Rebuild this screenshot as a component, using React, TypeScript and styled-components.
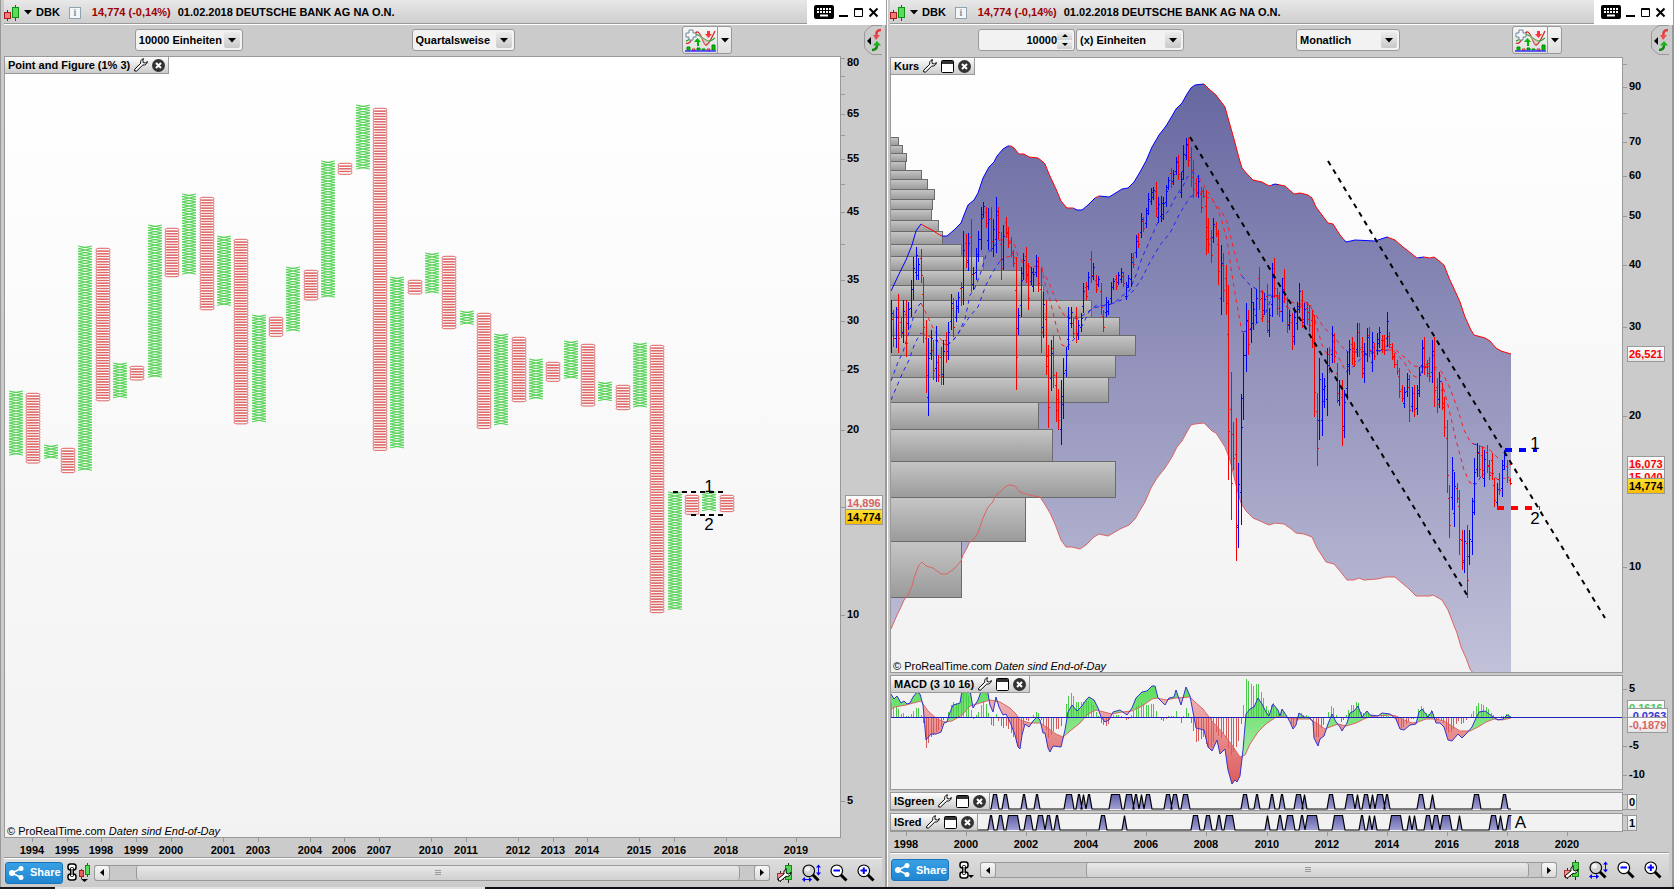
import React from "react";
import styled, { createGlobalStyle } from "styled-components";

const GlobalStyle = createGlobalStyle`
  * { box-sizing: border-box; }
  html, body, #root { height: 100%; }
  body {
    margin: 0;
    background: #fff;
    color: #000;
    font: bold 11px/13px "Liberation Sans", Arial, sans-serif;
  }
  button, input, select { font: inherit; color: inherit; margin: 0; padding: 0; }
  svg { display: block; }
`;

/* ---------- types and helpers ---------- */

type Pt = [number, number];

const parsePoints = (s: string): Pt[] =>
  s.trim().split(/\s+/).map((p) => p.split(",").map(Number) as Pt);

const linePath = (pts: Pt[]) => "M" + pts.map((p) => p.join(" ")).join("L");

const yAt = (pts: Pt[], x: number) => {
  for (let i = 1; i < pts.length; i++) {
    if (x <= pts[i][0]) {
      const [x0, y0] = pts[i - 1];
      const [x1, y1] = pts[i];
      return y0 + ((x - x0) / (x1 - x0)) * (y1 - y0);
    }
  }
  return pts[pts.length - 1][1];
};

/** Splits a line into the parts inside the given x ranges. */
const slicePath = (pts: Pt[], ranges: Pt[]) =>
  ranges
    .map(([a, b]) =>
      linePath([[a, yAt(pts, a)], ...pts.filter((p) => p[0] > a && p[0] < b), [b, yAt(pts, b)]])
    )
    .join("");

/* ---------- layout ---------- */

const Workspace = styled.main`
  display: grid;
  grid-template-columns: 887fr 786fr;
  column-gap: 1px;
  min-width: 1000px;
  min-height: 600px;
  height: 100vh;
  padding-bottom: 2px;
  background: linear-gradient(90deg, #1a1a1e 0 55px, #e2e2e2 55px 29%, #120d16 29%) bottom / 100% 2px no-repeat #fff;
`;

const Win = styled.section<{ $edge?: boolean }>`
  display: flex;
  flex-direction: column;
  min-width: 0;
  min-height: 0;
  background: #cbcbcb;
  border-left: ${(p) => (p.$edge ? "1px solid #999" : "0")};
  padding-left: ${(p) => (p.$edge ? "3px" : "2px")};
  border-right: 2px solid #999;
`;

const TitleBar = styled.header`
  display: flex;
  height: 25px;
  flex: none;
  margin-right: -1px;
  border-bottom: 1px solid #fff;
`;

const TitleMain = styled.div`
  display: flex;
  align-items: center;
  flex: 1;
  min-width: 0;
  padding-top: 2px;
  overflow: hidden;
  white-space: nowrap;
  border-bottom: 1px solid #999;
  background: linear-gradient(#e8e8e8, #cecece);
`;

const IconButton = styled.button`
  display: flex;
  align-items: center;
  justify-content: center;
  border: 0;
  background: none;
`;

const SymbolButton = styled(IconButton)`
  gap: 4px;
  height: 20px;
`;

const InfoButton = styled.button`
  width: 12px;
  height: 12px;
  margin: 0 11px 0 9px;
  border: 1px solid #8fa3b0;
  background: #f4f7f9;
  color: #7d93a3;
  font: bold 10px/10px "Liberation Serif", serif;
`;

const Quote = styled.span`
  color: #9d0000;
  margin-right: 7px;
`;

const WindowControls = styled.div`
  display: flex;
  align-items: center;
  gap: 4px;
  width: 79px;
  padding-left: 7px;
  background: #fff;
`;

const Toolbar = styled.div<{ $h: number; $cols: string }>`
  display: grid;
  grid-template-columns: ${(p) => p.$cols};
  height: ${(p) => p.$h}px;
  flex: none;
  padding-bottom: ${(p) => p.$h - 30}px;
`;

const Field = styled.div<{ $w: number }>`
  position: relative;
  width: ${(p) => p.$w}px;
  height: 22px;
  margin-top: 4px;
  border: 1px solid #999;
  border-radius: 3px;
  background: #f2f2f2;
`;

const SelectBox = styled.select`
  appearance: none;
  width: 100%;
  height: 100%;
  border: 0;
  padding: 0 0 0 3px;
  background: transparent;
  outline: 0;
`;

const SelectArrow = styled.span`
  position: absolute;
  right: 2px;
  top: 2px;
  width: 16px;
  height: 16px;
  display: flex;
  align-items: center;
  justify-content: center;
  border-radius: 2px;
  background: linear-gradient(#ececec, #c9c9c9);
  pointer-events: none;
`;

const Units = styled.div`
  display: flex;
  gap: 1px;
`;

const NumberField = styled(Field)`
  display: flex;
  align-items: center;
  padding-right: 2px;
`;

const NumberInput = styled.input`
  flex: 1;
  min-width: 0;
  border: 0;
  outline: 0;
  background: transparent;
  text-align: right;
`;

const Spinner = styled.span`
  display: flex;
  flex-direction: column;
  gap: 1px;
`;

const SpinButton = styled(IconButton)`
  width: 15px;
  height: 8px;
  background: linear-gradient(#ececec, #cfcfcf);
`;

const Split = styled.div`
  display: flex;
  width: 50px;
  height: 28px;
  margin-top: 1px;
  border: 1px solid #999;
  border-radius: 3px;
  background: linear-gradient(#f6f6f6, #dedede);
`;

const SplitMain = styled(IconButton)`
  width: 35px;
  border-right: 1px solid #999;
`;

const SplitMore = styled(IconButton)`
  flex: 1;
`;

const SideTab = styled(IconButton)`
  width: 18px;
  height: 30px;
`;

const Row = styled.div<{ $h?: number; $axis: number; $gap?: boolean }>`
  display: grid;
  grid-template-columns: minmax(0, 1fr) ${(p) => p.$axis}px;
  ${(p) => (p.$h ? `flex: none; height: ${p.$h}px;` : "flex: 1; min-height: 0;")}
  margin-bottom: ${(p) => (p.$gap ? "2px" : "0")};
`;

const PlotBox = styled.div<{ $flat?: boolean }>`
  position: relative;
  min-width: 0;
  min-height: 0;
  border: 1px solid #999;
  overflow: hidden;
  background: ${(p) => (p.$flat ? "#f2f2f2" : "linear-gradient(#ffffff, #f2f2f2)")};
`;

const PlotSvg = styled.svg`
  position: absolute;
  inset: 0;
  width: 100%;
  height: 100%;
`;

const PanelTab = styled.div`
  position: absolute;
  left: 0;
  top: 0;
  display: flex;
  align-items: center;
  gap: 4px;
  height: 17px;
  padding: 0 3px;
  border: solid #999;
  border-width: 0 1px 1px 0;
  background: linear-gradient(#fdfdfd, #cccccc);
  white-space: nowrap;
`;

const PanelButton = styled(IconButton)`
  height: 15px;
`;

const Credit = styled.p`
  position: absolute;
  left: 2px;
  bottom: 0;
  margin: 0;
  font-weight: normal;
  line-height: 11px;
`;

const Note = styled.span.attrs<{ $x: number; $y: number }>((p) => ({
  style: { left: `${p.$x}%`, top: `${p.$y}%` },
}))<{ $x: number; $y: number }>`
  position: absolute;
  transform: translate(-50%, -50%);
  font: 17px/20px "Liberation Sans", Arial, sans-serif;
`;

const Scale = styled.div`
  position: relative;
`;

const YTick = styled.span.attrs<{ $at: number }>((p) => ({ style: { top: `${p.$at}%` } }))<{
  $at: number;
}>`
  position: absolute;
  left: 0;
  height: 13px;
  margin-top: -7px;
  padding-left: 6px;
  &::before {
    content: "";
    position: absolute;
    left: 0;
    top: 7px;
    width: 4px;
    height: 1px;
    background: #999;
  }
`;

const YTickPlain = styled(YTick)`
  &::before { display: none; }
`;

const ValueBox = styled.span.attrs<{ $at: number }>((p) => ({ style: { top: `${p.$at}%` } }))<{
  $at: number;
  $color: string;
  $gold?: boolean;
}>`
  position: absolute;
  left: 4px;
  height: 16px;
  margin-top: -8px;
  padding: 0 1px;
  border: 1px solid #999;
  line-height: 14px;
  color: ${(p) => p.$color};
  background: ${(p) => (p.$gold ? "linear-gradient(#ffe033, #f5bd00)" : "linear-gradient(#fff, #e4e4e4)")};
`;

const TimeScale = styled.div<{ $h: number; $axis: number }>`
  position: relative;
  flex: none;
  height: ${(p) => p.$h}px;
  margin-right: ${(p) => p.$axis}px;
`;

const XTick = styled.span.attrs<{ $at: number }>((p) => ({ style: { left: `${p.$at}%` } }))<{
  $at: number;
}>`
  position: absolute;
  top: 0;
  width: 40px;
  margin-left: -20px;
  padding-top: 6px;
  text-align: center;
  &::before {
    content: "";
    position: absolute;
    left: 20px;
    top: 0;
    width: 1px;
    height: 4px;
    background: #999;
  }
`;

const BottomBar = styled.footer<{ $h: number }>`
  display: flex;
  align-items: center;
  flex: none;
  height: ${(p) => p.$h}px;
  padding: 0 7px 0 1px;
  margin-right: 3px;
  border-top: 1px solid #999;
  box-shadow: inset 0 1px #fff;
  background: linear-gradient(#dedede, #cacaca);
`;

const ShareButton = styled.button`
  display: flex;
  align-items: center;
  gap: 6px;
  width: 58px;
  height: 22px;
  padding-left: 3px;
  border: 1px solid #1774ba;
  border-radius: 3px;
  background: linear-gradient(#38a0e4, #2186d0);
  color: #fff;
`;

const LinkButton = styled(IconButton)<{ $w: number; $ml: number }>`
  width: ${(p) => p.$w}px;
  margin-left: ${(p) => p.$ml}px;
`;

const ScrollTrack = styled.div<{ $ml: number }>`
  display: flex;
  flex: 1;
  height: 16px;
  margin: 0 7px 0 ${(p) => p.$ml}px;
  border: solid #999;
  border-width: 1px 0;
  border-radius: 3px;
  background: #c9c9c9;
`;

const ScrollButton = styled(IconButton)`
  width: 16px;
  height: 16px;
  margin-top: -1px;
  border: 1px solid #999;
  border-radius: 3px;
  background: linear-gradient(#f8f8f8, #dadada);
`;

const ScrollGap = styled.span<{ $flex: number }>`
  flex: ${(p) => p.$flex};
`;

const ScrollThumb = styled.div<{ $flex: number }>`
  display: flex;
  align-items: center;
  justify-content: center;
  flex: ${(p) => p.$flex};
  border: solid #999;
  border-width: 0 1px;
  border-radius: 3px;
  background: linear-gradient(#e8e8e8, #d0d0d0);
`;

const Tools = styled.div`
  display: flex;
  align-items: center;
  gap: 9px;
`;

/* ---------- icons ---------- */

const Arrow = ({ dir = "down" }: { dir?: "down" | "up" | "left" | "right" | "smallDown" }) => {
  const d = {
    down: "M0 0H8L4 4.5Z",
    smallDown: "M0 0H6L3 3Z",
    up: "M0 3H6L3 0Z",
    left: "M4 0V7L0 3.5Z",
    right: "M0 0V7L4 3.5Z",
  }[dir];
  const [w, h] = { down: [8, 5], smallDown: [6, 3], up: [6, 3], left: [4, 7], right: [4, 7] }[dir];
  return (
    <svg width={w} height={h}>
      <path d={d} />
    </svg>
  );
};

const CandleIcon = () => (
  <svg width="16" height="16">
    <path d="M3.5 5V16" stroke="#8c1717" />
    <rect x="0.5" y="7.5" width="6" height="6" fill="#f37c7c" stroke="#a81c1c" />
    <path d="M11.5 0V16" stroke="#0b6b0b" />
    <rect x="8.5" y="2.5" width="6" height="10" fill="#59dc59" stroke="#109010" />
  </svg>
);

const KeyboardIcon = () => (
  <svg width="20" height="14">
    <rect width="20" height="14" rx="2" />
    <path d="M3 4H17M3 7H17" stroke="#fff" strokeWidth="2" strokeDasharray="2 1" />
    <path d="M6 10.5H14" stroke="#fff" strokeWidth="2" />
  </svg>
);

const WinIcon = ({ kind }: { kind: "min" | "max" | "close" }) => (
  <svg width="11" height="11" fill="none" stroke="#000">
    {kind === "min" && <path d="M1 9H10" strokeWidth="2" />}
    {kind === "max" && <path d="M1.5 1.5H9.5V9.5H1.5ZM1 2.5H10" />}
    {kind === "close" && <path d="M1.5 1.5L9.5 9.5M9.5 1.5L1.5 9.5" strokeWidth="2" />}
  </svg>
);

const IndicatorIcon = () => (
  <svg width="31" height="24" fill="none">
    <path d="M1 15C6 18 8 5 12 4S18 17 21 17 27 9 30 3" stroke="#cc2a2a" strokeWidth="1.3" />
    <path d="M1 13C5 12 9 5 13 7S22 14 25 13 28 11 30 10" stroke="#2bab2b" strokeWidth="1.3" />
    <path d="M12 4L18 13 20 17 24 13 19 11Z" fill="#d9b3b3" opacity=".6" />
    <path d="M22 3H25V6H27L23.500 10 20 6H22Z" fill="#f33" />
    <path d="M12 18V14H9L12.500 10 16 14H14V18Z" fill="#00b400" />
    <path d="M4 2H8V5H11V9H8V12H4V9H1V5H4Z" fill="#f5f8fa" stroke="#718797" />
    <path d="M2 19H5V22H2ZM12 20H15V22H12ZM17 21H20V22H17ZM27 17H30V22H27Z" fill="#00c000" stroke="#008a00" />
    <path d="M7.500 21H10V22.500H7.500ZM22 21H25V22.500H22Z" stroke="#c22" />
    <path d="M0 23H31" stroke="#33f" strokeWidth="1.500" />
  </svg>
);

const SideTabIcon = () => (
  <svg width="18" height="30" fill="none">
    <path d="M18 .5H8Q1 5 .5 8V22Q1 25 8 29.500H18" stroke="#999" />
    <path d="M7 12V20L3 16Z" fill="#000" />
    <path d="M17 5C13 5 12 7 12.500 11" stroke="#e23b3b" strokeWidth="2.500" />
    <path d="M9 10H16L12 15Z" fill="#f24a4a" />
    <path d="M8 25C12 25 13 22 13 20" stroke="#118c11" strokeWidth="2.500" />
    <path d="M9 20.500H17L13 16Z" fill="#19b419" />
  </svg>
);

const WrenchIcon = () => (
  <svg width="14" height="14" fill="#fff" stroke="#000">
    <path d="M9.500 .7C7.300 1.200 6.200 3 6.800 5.200L.7 11.200V13H2.600L8.800 7C11 7.500 13 6.200 13.400 3.600L11.400 5 9.200 4.600 8.900 2.300Z" />
  </svg>
);

const PaneIcon = () => (
  <svg width="13" height="13">
    <rect x=".5" y=".5" width="12" height="12" rx="1" fill="#fff" stroke="#000" />
    <rect x="1" y="1" width="11" height="3" fill="#333" />
  </svg>
);

const CloseIcon = () => (
  <svg width="13" height="13">
    <circle cx="6.500" cy="6.500" r="6.500" fill="#333" />
    <path d="M4 4L9 9M9 4L4 9" stroke="#fff" strokeWidth="2" />
  </svg>
);

const ShareIcon = () => (
  <svg width="15" height="14">
    <path d="M12 2.500L3 7L12 11.500" fill="none" stroke="#fff" strokeWidth="1.500" />
    <circle cx="12" cy="2.500" r="2.500" fill="#fff" />
    <circle cx="3" cy="7" r="3" fill="#fff" />
    <circle cx="12" cy="11.500" r="2.500" fill="#fff" />
  </svg>
);

const Chain = () => (
  <g fill="none" strokeWidth="1">
    <rect x="1" y="1" width="8" height="6" rx="2.500" fill="#fff" stroke="#000" strokeWidth="1.500" />
    <rect x="1" y="11" width="8" height="6" rx="2.500" fill="#fff" stroke="#000" strokeWidth="1.500" />
    <rect x="3.500" y="4.500" width="3" height="9" rx="1" fill="#fff" stroke="#000" />
    <path d="M5 6V12" stroke="#000" />
  </g>
);

const ChainCandleIcon = () => (
  <svg width="24" height="20">
    <Chain />
    <path d="M14.500 6V16" stroke="#8c1717" />
    <rect x="12.500" y="7.500" width="4" height="6" fill="#e86060" stroke="#a81c1c" />
    <path d="M20.500 0V14" stroke="#0b6b0b" />
    <rect x="18.500" y="2.500" width="4" height="9" fill="#59dc59" stroke="#109010" />
    <path d="M14 16H21L17.500 19Z" />
  </svg>
);

const ChainIcon = () => (
  <svg width="15" height="18">
    <Chain />
    <path d="M9 14H15L12 17Z" />
  </svg>
);

const ToolIcon = () => (
  <svg width="16" height="20">
    <path d="M3.500 8V19M11.500 0V20" stroke="#222" />
    <rect x=".5" y="10.500" width="6" height="6" fill="#f09090" stroke="#a33" />
    <rect x="8.500" y="2.500" width="6" height="14" fill="#4fd44f" stroke="#178a17" />
    <path
      d="M9.300 5.800C7.300 6.500 6.400 8.800 7.100 10.800L1.400 15.600V17.800H3.700L8.900 13.400C11.500 14 13.800 12.200 14 9.400L11.600 11 9.400 10.200 9 8Z"
      fill="#fff"
      stroke="#000"
    />
  </svg>
);

const LensIcon = ({ kind }: { kind: "fit" | "out" | "in" }) => (
  <svg width={kind === "fit" ? 19 : 18} height="18" fill="none">
    <path d="M10.500 10.500L16.500 16.500" stroke="#000" strokeWidth="3" />
    <circle cx="6.800" cy="6.800" r="5.800" fill={kind === "fit" ? "#d2d2d2" : "#fff"} stroke="#000" strokeWidth="1.200" />
    {kind === "fit" && (
      <>
        <circle cx="5.500" cy="5" r="2.500" fill="#f4f4f4" />
        <path d="M16.500 1V10M1 15.500H9" stroke="#00f" />
        <path d="M14 3.500L16.500 .5 19 3.500ZM14 8.500L16.500 11.500 19 8.500ZM3 13L0 15.500 3 18ZM7 13L10 15.500 7 18Z" fill="#00f" />
      </>
    )}
    {kind !== "fit" && <path d="M3.500 6.500H10" stroke="#00f" strokeWidth="2" />}
    {kind === "in" && <path d="M6.800 3.500V10" stroke="#00f" strokeWidth="2" />}
  </svg>
);

const Grip = () => (
  <svg width="6" height="6">
    <path d="M0 .5H6M0 2.500H6M0 4.500H6" stroke="#999" />
  </svg>
);

/* ---------- shared parts ---------- */

const Title = () => (
  <TitleBar>
    <TitleMain>
      <SymbolButton aria-label="Instrument">
        <CandleIcon />
        <Arrow />
        <span>DBK</span>
      </SymbolButton>
      <InfoButton aria-label="Info">i</InfoButton>
      <Quote>14,774 (-0,14%)</Quote>
      <span>01.02.2018 DEUTSCHE BANK AG NA O.N.</span>
    </TitleMain>
    <WindowControls>
      <IconButton aria-label="Keyboard"><KeyboardIcon /></IconButton>
      <IconButton aria-label="Minimize"><WinIcon kind="min" /></IconButton>
      <IconButton aria-label="Maximize"><WinIcon kind="max" /></IconButton>
      <IconButton aria-label="Close"><WinIcon kind="close" /></IconButton>
    </WindowControls>
  </TitleBar>
);

const Dropdown = ({ label, value, width }: { label: string; value: string; width: number }) => (
  <Field $w={width}>
    <SelectBox aria-label={label} defaultValue={value}>
      <option>{value}</option>
    </SelectBox>
    <SelectArrow><Arrow /></SelectArrow>
  </Field>
);

const Indicators = () => (
  <Split>
    <SplitMain aria-label="Indicators"><IndicatorIcon /></SplitMain>
    <SplitMore aria-label="More indicators"><Arrow /></SplitMore>
  </Split>
);

const Panel = ({ name, pane = true }: { name: string; pane?: boolean }) => (
  <PanelTab>
    <span>{name}</span>
    <PanelButton aria-label={`${name} settings`}><WrenchIcon /></PanelButton>
    {pane && <PanelButton aria-label={`${name} pane`}><PaneIcon /></PanelButton>}
    <PanelButton aria-label={`${name} close`}><CloseIcon /></PanelButton>
  </PanelTab>
);

const CreditLine = () => (
  <Credit>
    © ProRealTime.com <i>Daten sind End-of-Day</i>
  </Credit>
);

interface YScaleProps {
  top: number;
  height: number;
  ticks: [number, string][];
  children?: React.ReactNode;
}

const YScale = ({ top, height, ticks, children }: YScaleProps) => (
  <Scale>
    {ticks.map(([y, label]) => (
      <YTick key={y} $at={((y - top) / height) * 100}>{label}</YTick>
    ))}
    {children}
  </Scale>
);

interface XScaleProps {
  left: number;
  width: number;
  height: number;
  axis: number;
  ticks: [number, number][];
}

const XScale = ({ left, width, height, axis, ticks }: XScaleProps) => (
  <TimeScale $h={height} $axis={axis}>
    {ticks.map(([x, year]) => (
      <XTick key={x} $at={((x - left) / width) * 100}>{year}</XTick>
    ))}
  </TimeScale>
);

interface FooterProps {
  height: number;
  candles?: boolean;
  before: number;
  thumb: number;
  after: number;
}

const Footer = ({ height, candles, before, thumb, after }: FooterProps) => (
  <BottomBar $h={height}>
    <ShareButton><ShareIcon />Share</ShareButton>
    <LinkButton $w={candles ? 24 : 15} $ml={candles ? 4 : 10} aria-label="Link windows">
      {candles ? <ChainCandleIcon /> : <ChainIcon />}
    </LinkButton>
    <ScrollTrack $ml={candles ? 3 : 6}>
      <ScrollButton aria-label="Scroll left"><Arrow dir="left" /></ScrollButton>
      <ScrollGap $flex={before} />
      <ScrollThumb $flex={thumb}><Grip /></ScrollThumb>
      <ScrollGap $flex={after} />
      <ScrollButton aria-label="Scroll right"><Arrow dir="right" /></ScrollButton>
    </ScrollTrack>
    <Tools>
      <IconButton aria-label="Chart settings"><ToolIcon /></IconButton>
      <IconButton aria-label="Fit zoom"><LensIcon kind="fit" /></IconButton>
      <IconButton aria-label="Zoom out"><LensIcon kind="out" /></IconButton>
      <IconButton aria-label="Zoom in"><LensIcon kind="in" /></IconButton>
    </Tools>
  </BottomBar>
);

/* ---------- point and figure chart ---------- */

const BOX = 2.67;

/* Columns alternate between rising (X) and falling (O): top and bottom of each. */
const PF_COLUMNS = parsePoints(`
391,456 393,462 445,459 448,473 246,471 248,401 363,399 366,380 225,378 228,277 194,275 197,308
236,306 239,424 315,422 317,335 267,332 270,300 161,298 163,173 105,170 108,451 277,449 280,294
253,292 256,328 311,325 313,428 334,426 337,400 359,398 362,382 341,379 344,405 382,401 385,410
343,408 345,612 492,610 495,515 492,512 495,512`);

const pfColumn = (x: number, top: number, bottom: number, rising: boolean) => {
  const n = Math.round((bottom - top) / BOX);
  let d = "";
  for (let i = 0; i < n; i++) {
    const y = +(top + i * BOX).toFixed(2);
    d += rising
      ? `M${x - 7} ${y}l14 ${BOX}m0 -${BOX}l-14 ${BOX}`
      : `M${x - 4} ${y + 0.3}h8c4 0 4 3 0 3h-8c-4 0 -4 -3 0 -3`;
  }
  return d;
};

const PointFigure = () => (
  <PlotSvg viewBox="5 57 835 780" preserveAspectRatio="none" fill="none">
    {PF_COLUMNS.map(([top, bottom], i) => (
      <path
        key={i}
        d={pfColumn(Math.round(16 + i * 17.33), top, bottom, i % 2 === 0)}
        stroke={i % 2 === 0 ? "#53d253" : "#de6262"}
      />
    ))}
    <path d="M673 492H727M691 515H727" stroke="#000" strokeWidth="2" strokeDasharray="5 4" />
  </PlotSvg>
);

const LeftWindow = () => (
  <Win $edge>
    <Title />
    <Toolbar $h={31} $cols="131fr auto 169fr auto 168fr auto 132fr auto 3px">
      <span />
      <Dropdown label="Units" value="10000 Einheiten" width={108} />
      <span />
      <Dropdown label="Period" value="Quartalsweise" width={103} />
      <span />
      <Indicators />
      <span />
      <SideTab aria-label="Trading"><SideTabIcon /></SideTab>
    </Toolbar>
    <Row $axis={44}>
      <PlotBox>
        <PointFigure />
        <Panel name="Point and Figure (1% 3)" pane={false} />
        <Note $x={84.3} $y={55.1}>1</Note>
        <Note $x={84.3} $y={60}>2</Note>
        <CreditLine />
      </PlotBox>
      <YScale
        top={56}
        height={782}
        ticks={[
          [58, ""], [76, ""], [94, ""], [114, "65"], [135, ""], [159, "55"], [184, ""], [212, "45"],
          [244, ""], [280, "35"], [321, "30"], [370, "25"], [430, "20"], [507, ""], [615, "10"], [801, "5"],
        ]}
      >
        <YTickPlain $at={0.9}>80</YTickPlain>
        <ValueBox $at={57.2} $color="#d86464">14,896</ValueBox>
        <ValueBox $at={58.9} $color="#000" $gold>14,774</ValueBox>
      </YScale>
    </Row>
    <XScale
      left={4}
      width={837}
      height={19}
      axis={44}
      ticks={[
        [32, 1994], [67, 1995], [101, 1998], [136, 1999], [171, 2000], [223, 2001], [258, 2003],
        [310, 2004], [344, 2006], [379, 2007], [431, 2010], [466, 2011], [518, 2012], [553, 2013],
        [587, 2014], [639, 2015], [674, 2016], [726, 2018], [796, 2019],
      ]}
    />
    <Footer height={30} candles before={26} thumb={603} after={14} />
  </Win>
);

/* ---------- price chart ---------- */

const VOLUME_TOPS = [
  137, 145, 153, 161, 170, 179, 189, 199, 209, 220, 231, 244, 256, 270, 285, 300, 317, 335, 355, 377,
  402, 429, 461, 497, 541, 597,
];
const VOLUME_ENDS = [
  898, 902, 906, 905, 921, 927, 934, 932, 931, 938, 942, 961, 983, 1021, 1043, 1091, 1119, 1135, 1115,
  1108, 1038, 1052, 1115, 1025, 961,
];

const UPPER = parsePoints(`
891,291 900,272 906,260 912,245 916,231 921,224 926,227 932,230 938,234 942,236 947,236 954,230
961,223 964,215 968,205 974,200 978,193 983,178 989,167 994,162 997,156 1003,149 1008,146 1011,146
1014,148 1019,154 1024,154 1029,157 1038,158 1042,161 1045,164 1049,174 1056,189 1061,201 1067,208
1073,208 1077,210 1082,210 1088,205 1095,198 1099,196 1109,197 1114,194 1122,189 1128,188 1134,182
1140,172 1146,161 1152,147 1159,135 1166,126 1172,116 1176,109 1182,103 1187,94 1191,88 1195,85
1204,84 1209,89 1216,95 1222,103 1225,107 1230,125 1234,139 1239,158 1242,168 1248,175 1253,180
1262,182 1269,186 1275,184 1285,186 1294,194 1300,193 1308,195 1312,198 1316,207 1322,215 1328,223
1333,224 1340,235 1346,242 1355,240 1375,241 1387,237 1395,240 1403,247 1407,250 1417,258 1424,257
1430,258 1434,257 1438,260 1444,265 1449,278 1456,293 1460,302 1465,317 1471,330 1474,335 1485,338
1490,341 1496,348 1501,351 1511,354`);

const LOWER = parsePoints(`
891,629 897,615 901,607 904,600 908,595 912,586 915,575 919,565 922,562 926,566 933,568 941,574
947,574 955,568 961,561 963,555 967,548 969,543 974,539 978,533 983,518 988,507 992,503 997,494
1001,491 1005,487 1009,485 1015,486 1020,492 1026,494 1034,496 1040,497 1044,503 1050,513 1055,524
1061,540 1066,547 1072,547 1080,549 1086,545 1094,537 1099,534 1108,536 1115,532 1120,529 1129,525
1135,519 1139,512 1145,502 1151,488 1157,478 1165,468 1172,457 1177,447 1182,441 1188,430 1191,425
1195,424 1204,423 1212,431 1216,433 1225,447 1230,460 1236,485 1241,503 1246,511 1253,518 1260,521
1269,525 1275,523 1284,524 1290,528 1296,533 1304,534 1312,537 1317,548 1326,562 1334,564 1340,571
1347,580 1354,580 1359,578 1364,580 1377,579 1386,577 1395,577 1402,583 1408,588 1416,596 1430,596
1433,595 1442,600 1448,610 1453,623 1457,633 1461,647 1466,658 1470,669 1473,673`);

const UP_RANGES: Pt[] = [[942, 1009], [1074, 1095], [1100, 1204], [1272, 1278], [1344, 1388], [1418, 1424]];
const DOWN_RANGES: Pt[] = [
  [921, 942], [1009, 1074], [1095, 1100], [1204, 1272], [1278, 1344], [1388, 1418], [1424, 1511],
];

const FAST = parsePoints(`
891,381 898,362 903,352 909,332 914,315 919,305 921,303 926,313 932,326 938,336 944,343 947,345
952,342 958,334 965,319 970,295 974,290 980,275 986,255 993,247 1000,240 1008,240 1014,243 1018,256
1028,266 1042,267 1044,280 1050,300 1056,325 1062,345 1067,347 1075,338 1082,326 1090,310 1097,305
1105,306 1114,303 1122,296 1130,290 1136,275 1142,258 1150,240 1158,222 1164,217 1170,208 1176,196
1183,186 1188,176 1193,172 1199,178 1207,190 1214,202 1221,218 1227,240 1232,275 1237,305 1242,332
1248,331 1257,323 1265,315 1272,296 1280,297 1290,310 1297,312 1304,302 1310,303 1315,320 1322,345
1327,354 1334,348 1340,360 1346,372 1355,365 1364,355 1380,351 1388,345 1395,352 1404,362 1412,375
1418,378 1424,368 1432,366 1440,375 1448,405 1456,440 1464,470 1470,483 1476,484 1482,475 1490,472
1498,480 1504,478 1511,480`);

const SLOW = parsePoints(`
891,400 897,386 903,372 909,360 915,343 921,333 930,337 938,342 947,345 955,338 962,328 970,316
978,307 986,285 994,270 1002,258 1012,256 1022,262 1030,267 1038,266 1044,273 1050,285 1058,305
1064,315 1070,318 1078,319 1086,313 1094,308 1105,305 1114,303 1126,298 1134,290 1142,278 1150,262
1160,245 1170,233 1180,213 1190,197 1200,192 1212,200 1222,212 1227,222 1234,250 1241,275 1250,285
1258,290 1268,295 1280,296 1288,300 1296,304 1308,304 1316,315 1324,328 1334,336 1340,345 1348,352
1360,352 1388,350 1396,350 1404,357 1414,366 1422,367 1434,366 1442,372 1450,388 1458,410 1464,430
1471,443 1480,446 1490,450 1498,458 1505,462 1511,465`);

const AVG_UP: Pt[] = [[891, 921], [947, 1000], [1067, 1199], [1242, 1276], [1346, 1388], [1420, 1426], [1473, 1482]];
const AVG_DOWN: Pt[] = [[921, 947], [1000, 1067], [1199, 1242], [1276, 1346], [1388, 1420], [1426, 1473], [1482, 1511]];

/* Monthly bars, B rising and R falling, with the y of the high and of the low. */
const BARS_EARLY = `
B300-353 R310-347 B307-348 R294-353 R317-338 B300-343 R300-357 B302-330 B280-317 B257-300 B247-280
B258-280 R249-283 R277-343 R320-393 B338-416 B330-360 R340-380 B326-382 R355-382 R347-385 B340-385
R332-363 B322-360 B294-330 R298-337 B300-322 B292-313 R282-306 B231-305 R234-268 B233-271 R219-292
B267-290 B248-280 B231-262 B207-250 B202-218 R207-228 B208-250 R207-252 B219-257 B197-253 R207-240
R232-280 B225-270 R217-238 R227-248 R237-257 R250-267 R257-390 B308-335 B267-317 B253-280 R247-283
R263-310 B267-285 B268-292 B255-277 R257-292 R268-353 B292-338 R300-375 R345-428 B340-391 R335-388
R372-422 R389-430 B380-445 B358-419 B347-377 B307-350 B307-328 R318-338 R307-343 B320-340 B313-332
B283-313 R282-300 B272-290 R251-283 B263-280 R275-293 B276-287 R283-315 R310-332 B297-317 B300-315
B282-303 B278-290 R275-290 B272-285 B268-283 R272-287 B282-300 B275-288 B253-287 R253-268 B235-258
R233-248 B213-238 R217-232 B208-228 B193-215 B188-205 B187-200 R182-217 B197-223 B196-222 B197-220
B185-207 B177-190 R168-188 B170-185 B157-175 R155-180 B172-198 B145-180 B138-160 R138-167 R147-187
R160-198 R178-197 B175-198 R187-213 R188-198 R190-255 R218-253 R230-263 B218-243 R222-237 R230-285
B245-315 R253-302 R265-315 R285-480 R372-520 R422-470 R418-561 B463-548 B394-525 B333-420 B303-372
R310-355 B288-343 B302-330 B289-323 R267-310`;

const BARS_LATE = `
R290-322 B293-315 R284-333 B308-337 B263-317 R258-298 R288-315 R292-317 B278-322 R269-303 R297-333
B310-330 R313-350 B307-345 B302-330 B283-313 R290-328 B303-328 R302-325 R305-332 R310-348 R315-417
R393-466 B358-440 B373-436 B378-408 B348-416 R347-373 B326-363 R333-363 R363-403 B380-406 R380-446
B390-438 B352-400 B340-375 R337-365 R342-367 B323-357 R323-357 R337-378 B343-383 B328-362 R327-357
B332-372 R343-360 B333-355 B327-348 R335-353 R335-355 B312-347 R332-348 R343-360 R353-368 R360-375
R368-398 R385-402 B387-408 B373-397 R375-422 B387-412 R385-417 B385-415 B367-397 B340-373 R337-375
R360-377 R357-382 B340-383 R337-407 R378-413 B372-408 R383-410 R397-437 R420-493 R485-538 B457-510
B472-527 R483-503 R490-555 R530-570 B530-573 R525-598 B530-565 B498-555 B458-515 B443-477 R445-477
R447-478 B450-487 R445-473 R460-480 R453-480 R478-507 B483-508 R473-495 B460-497 B450-470 R460-483
R478-485`;

const barPaths = (src: string, from: number, to: number) => {
  const bars = src.trim().split(/\s+/);
  const out: Record<string, string> = { B: "", R: "" };
  bars.forEach((b, i) => {
    const x = Math.floor(from + (i * (to - from)) / (bars.length - 1)) + 0.5;
    const [hi, lo] = b.slice(1).split("-").map(Number);
    const a = Math.round(hi + (lo - hi) * 0.25) + 0.5;
    const z = Math.round(hi + (lo - hi) * 0.75) + 0.5;
    const [open, close] = b[0] === "B" ? [z, a] : [a, z];
    out[b[0]] += `M${x} ${hi}V${lo}M${x - 1.5} ${open}H${x}M${x} ${close}H${x + 1.5}`;
  });
  return out;
};

const EARLY = barPaths(BARS_EARLY, 891, 1259);
const LATE = barPaths(BARS_LATE, 1262, 1510);

const PriceChart = () => (
  <PlotSvg viewBox="891 58 731 614" preserveAspectRatio="none" fill="none">
    <defs>
      <linearGradient id="band" gradientUnits="userSpaceOnUse" x1="0" y1="58" x2="0" y2="672">
        <stop offset="0" stopColor="#64649f" />
        <stop offset="1" stopColor="#c1c1d9" />
      </linearGradient>
      <linearGradient id="volume" x1="0" y1="0" x2="0" y2="1">
        <stop offset="0" stopColor="#c6c6c6" />
        <stop offset="1" stopColor="#9a9a9a" />
      </linearGradient>
    </defs>
    <path
      fill="url(#band)"
      d={`${linePath(UPPER)}V673H1473${linePath([...LOWER].reverse()).replace("M", "L")}Z`}
    />
    {VOLUME_ENDS.map((x, i) => (
      <rect
        key={i}
        x="889.5"
        y={VOLUME_TOPS[i] + 0.5}
        width={x - 889}
        height={VOLUME_TOPS[i + 1] - VOLUME_TOPS[i]}
        fill="url(#volume)"
        stroke="#6b6b6b"
      />
    ))}
    <path d={linePath(LOWER)} stroke="#dc6464" />
    <path d={slicePath(UPPER, [[891, 921], ...UP_RANGES])} stroke="#0000ff" />
    <path d={slicePath(UPPER, DOWN_RANGES)} stroke="#ff0000" />
    {[FAST, SLOW].map((line, i) => (
      <g key={i} strokeDasharray="4 4">
        <path d={slicePath(line, AVG_UP)} stroke="#2020ff" />
        <path d={slicePath(line, AVG_DOWN)} stroke="#ff1a24" />
      </g>
    ))}
    <path d={EARLY.B + LATE.B} stroke="#0000ff" />
    <path d={EARLY.R + LATE.R} stroke="#ff0000" />
    <path d="M1190 137L1467 595M1328 161L1605 618" stroke="#000" strokeWidth="2" strokeDasharray="5 5" />
    <path d="M1505 450H1537" stroke="#0000ff" strokeWidth="4" strokeDasharray="7 7" />
    <path d="M1497 508H1540" stroke="#ff0000" strokeWidth="4" strokeDasharray="7 7" />
  </PlotSvg>
);

/* ---------- MACD ---------- */

const MACD = parsePoints(`
891,694 894,699 897,696 901,703 904,701 907,704 910,703 913,697 917,692 920,694 923,705 926,740
931,734 936,734 941,732 944,723 947,722 949,715 953,705 957,704 960,703 963,684 966,680 970,690
973,708 978,700 983,686 987,688 990,705 993,712 996,697 999,707 1003,715 1006,714 1010,722 1015,735
1018,747 1020,749 1022,735 1025,724 1029,727 1033,721 1037,717 1040,720 1043,733 1045,733 1048,748
1050,752 1053,746 1061,747 1065,730 1068,712 1072,705 1077,711 1082,706 1086,700 1089,697 1094,700
1098,708 1101,717 1105,722 1109,720 1113,712 1120,710 1127,715 1132,708 1136,698 1142,692 1147,691
1152,686 1155,686 1158,698 1165,705 1169,698 1174,697 1176,690 1181,705 1186,687 1190,696 1193,712
1196,728 1204,730 1208,747 1212,751 1217,740 1220,754 1225,749 1228,770 1232,784 1235,780 1237,782
1240,776 1243,750 1246,714 1250,709 1254,707 1258,698 1262,704 1266,712 1269,716 1273,704 1278,710
1280,716 1282,709 1286,715 1290,722 1293,729 1296,725 1299,713 1304,717 1310,718 1313,722 1314,738
1318,746 1320,739 1324,736 1328,724 1332,714 1336,722 1340,727 1342,731 1347,723 1350,713 1354,711
1358,706 1362,717 1367,711 1370,715 1378,716 1382,713 1390,714 1396,719 1400,729 1404,730 1410,725
1416,724 1419,712 1422,709 1428,717 1432,711 1436,723 1440,723 1444,727 1448,740 1452,741 1458,734
1462,738 1467,733 1472,727 1476,718 1479,712 1485,711 1492,716 1498,720 1503,719 1507,715 1511,717`);

const SIGNAL = parsePoints(`
891,709 895,707 906,705 913,703 921,701 928,711 937,719 945,722 952,721 962,715 970,706 980,703
990,700 1000,702 1010,708 1016,714 1020,720 1030,723 1040,723 1048,728 1056,734 1063,737 1070,731
1080,723 1088,714 1096,710 1104,712 1112,714 1122,712 1132,711 1142,706 1152,699 1157,698 1166,700
1176,698 1190,697 1195,702 1203,709 1212,721 1222,732 1232,745 1240,757 1245,755 1250,744 1258,732
1266,724 1276,717 1285,717 1296,719 1310,719 1318,724 1325,729 1330,727 1338,724 1346,726 1356,723
1366,718 1376,716 1390,715 1396,716 1404,720 1412,723 1418,722 1426,719 1436,719 1444,721 1452,726
1460,731 1470,731 1478,727 1486,722 1494,719 1502,720 1511,718`);

const between = (pick: (...v: number[]) => number) => {
  const edge: Pt[] = [];
  const back: Pt[] = [];
  for (let x = 891; x <= 1511; x++) {
    const s = yAt(SIGNAL, x);
    edge.push([x, +pick(s, yAt(MACD, x)).toFixed(1)]);
    back.unshift([x, +s.toFixed(1)]);
  }
  return linePath([...edge, ...back]) + "Z";
};

const histogram = (above: boolean) => {
  let d = "";
  for (let i = 0; i < 248; i++) {
    const x = Math.floor(891 + i * 2.5) + 0.5;
    const diff = Math.round(yAt(MACD, x) - yAt(SIGNAL, x));
    if (diff !== 0 && diff < 0 === above) d += `M${x} 717V${717 + diff}`;
  }
  return d;
};

const MacdChart = () => (
  <PlotSvg viewBox="891 676 731 113" preserveAspectRatio="none" fill="none">
    <defs>
      <linearGradient id="up" gradientUnits="userSpaceOnUse" x1="0" y1="685" x2="0" y2="757">
        <stop offset="0" stopColor="#5ade5a" />
        <stop offset="1" stopColor="#a4eaa4" />
      </linearGradient>
      <linearGradient id="down" gradientUnits="userSpaceOnUse" x1="0" y1="697" x2="0" y2="784">
        <stop offset="0" stopColor="#efb4b4" />
        <stop offset="1" stopColor="#de5a5a" />
      </linearGradient>
    </defs>
    <path d={between(Math.min)} fill="url(#up)" />
    <path d={between(Math.max)} fill="url(#down)" />
    <path d={histogram(true)} stroke="#4acb4a" />
    <path d={histogram(false)} stroke="#d85b5b" />
    <path d={linePath(SIGNAL)} stroke="#dc6464" />
    <path d={linePath(MACD)} stroke="#3434d0" />
    <path d="M891 717.5H1622" stroke="#2020c0" />
  </PlotSvg>
);

/* ---------- on/off signals ---------- */

const GREEN_ON = parsePoints(`
991,999 1002,1009 1021,1027 1034,1040 1064,1074 1076,1082 1081,1086 1086,1092 1109,1122 1124,1134
1133,1139 1139,1144 1144,1152 1164,1172 1171,1179 1181,1190 1241,1249 1254,1260 1269,1275 1279,1285
1294,1303 1302,1307 1327,1335 1345,1355 1355,1360 1362,1370 1370,1375 1375,1385 1384,1390 1417,1425
1430,1435 1472,1481 1501,1508`);

const RED_ON = parsePoints(`
988,994 997,1004 1006,1020 1024,1033 1036,1045 1045,1052 1054,1060 1099,1107 1122,1127 1191,1200
1204,1212 1216,1222 1224,1235 1265,1270 1277,1283 1285,1295 1299,1305 1305,1319 1332,1345 1359,1365
1367,1372 1372,1377 1389,1403 1407,1412 1412,1417 1424,1432 1432,1440 1440,1452 1457,1462 1489,1498
1498,1503 1506,1514`);

const signalPath = (on: Pt[]) =>
  "M891 16" + on.map(([a, b]) => `L${a} 16L${a + 2.5} 1.5L${b - 2.5} 1.5L${Math.min(b, 1511)} ${b > 1511 ? 1.5 : 16}`).join("");

const SignalChart = ({ on }: { on: Pt[] }) => (
  <PlotSvg viewBox="891 0 731 17" preserveAspectRatio="none">
    <defs>
      <linearGradient id="signal" x1="0" y1="0" x2="0" y2="1">
        <stop offset="0" stopColor="#6060a8" />
        <stop offset="1" stopColor="#a0a0d4" />
      </linearGradient>
    </defs>
    <path d={`${signalPath(on)}L1511 16`} fill="url(#signal)" />
    <path d={signalPath(on)} fill="none" stroke="#000" strokeWidth="1.2" />
    <path d={on === GREEN_ON ? "M1508 16H1511" : ""} stroke="#000" />
  </PlotSvg>
);

const RightWindow = () => (
  <Win>
    <Title />
    <Toolbar $h={32} $cols="88fr auto 112fr auto 112fr auto 89fr auto 3px">
      <span />
      <Units>
        <NumberField $w={97}>
          <NumberInput aria-label="Number of units" defaultValue="10000" inputMode="numeric" />
          <Spinner>
            <SpinButton aria-label="Increase"><Arrow dir="up" /></SpinButton>
            <SpinButton aria-label="Decrease"><Arrow dir="smallDown" /></SpinButton>
          </Spinner>
        </NumberField>
        <Dropdown label="Units" value="(x) Einheiten" width={108} />
      </Units>
      <span />
      <Dropdown label="Period" value="Monatlich" width={104} />
      <span />
      <Indicators />
      <span />
      <SideTab aria-label="Trading"><SideTabIcon /></SideTab>
    </Toolbar>
    <Row $axis={49} $gap>
      <PlotBox>
        <PriceChart />
        <Panel name="Kurs" />
        <Note $x={88.1} $y={62.8}>1</Note>
        <Note $x={88.1} $y={75}>2</Note>
        <CreditLine />
      </PlotBox>
      <YScale
        top={57}
        height={616}
        ticks={[
          [64, ""], [87, "90"], [113, ""], [142, "70"], [176, "60"], [216, "50"], [265, "40"],
          [327, "30"], [416, "20"], [567, "10"],
        ]}
      >
        <ValueBox $at={48.2} $color="#f00">26,521</ValueBox>
        <ValueBox $at={66.1} $color="#f00">16,073</ValueBox>
        <ValueBox $at={68.2} $color="#f00">15,040</ValueBox>
        <ValueBox $at={69.7} $color="#000" $gold>14,774</ValueBox>
      </YScale>
    </Row>
    <Row $axis={49} $h={115} $gap>
      <PlotBox $flat>
        <MacdChart />
        <Panel name="MACD (3 10 16)" />
      </PlotBox>
      <YScale top={675} height={115} ticks={[[689, "5"], [717, ""], [746, "-5"], [775, "-10"]]}>
        <ValueBox $at={29} $color="#53c653">0,1616</ValueBox>
        <ValueBox $at={36} $color="#3434d0">-0,0263</ValueBox>
        <ValueBox $at={43.5} $color="#d86464">-0,1879</ValueBox>
      </YScale>
    </Row>
    <Row $axis={49} $h={19} $gap>
      <PlotBox $flat>
        <SignalChart on={GREEN_ON} />
        <Panel name="ISgreen" />
      </PlotBox>
      <YScale top={0} height={19} ticks={[[2, ""], [17, ""]]}>
        <ValueBox $at={50} $color="#000">0</ValueBox>
      </YScale>
    </Row>
    <Row $axis={49} $h={19}>
      <PlotBox $flat>
        <SignalChart on={RED_ON} />
        <Panel name="ISred" />
        <Note $x={86.1} $y={50}>A</Note>
      </PlotBox>
      <YScale top={0} height={19} ticks={[[2, ""], [17, ""]]}>
        <ValueBox $at={50} $color="#000">1</ValueBox>
      </YScale>
    </Row>
    <XScale
      left={890}
      width={733}
      height={20}
      axis={49}
      ticks={[
        [906, 1998], [966, 2000], [1026, 2002], [1086, 2004], [1146, 2006], [1206, 2008], [1267, 2010],
        [1327, 2012], [1387, 2014], [1447, 2016], [1507, 2018], [1567, 2020],
      ]}
    />
    <Footer height={35} before={90} thumb={441} after={12} />
  </Win>
);

export default function App() {
  return (
    <>
      <GlobalStyle />
      <Workspace>
        <LeftWindow />
        <RightWindow />
      </Workspace>
    </>
  );
}
